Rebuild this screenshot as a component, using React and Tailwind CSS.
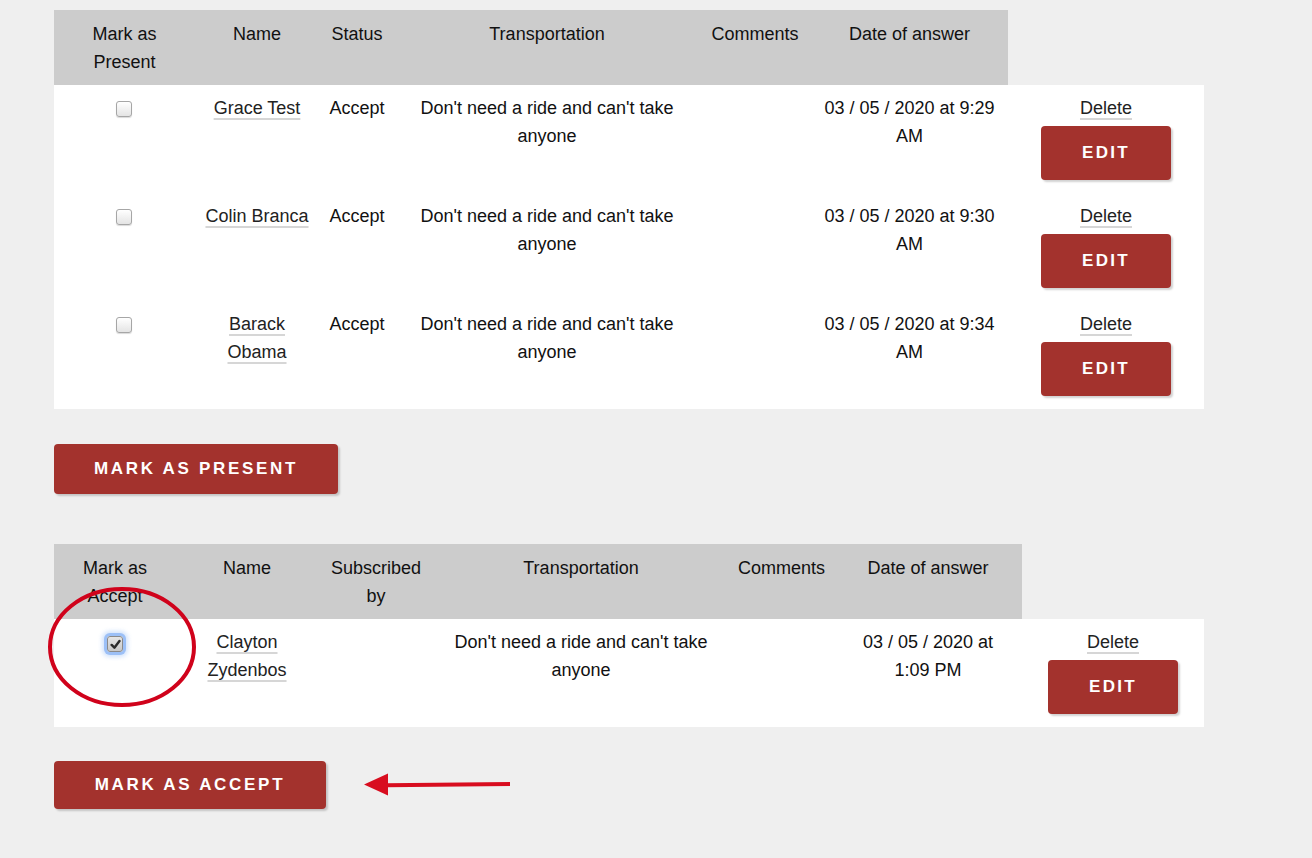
import React from "react";

const presentRows = [
    { name: "Grace Test", status: "Accept", date: "03 / 05 / 2020 at 9:29 AM" },
    { name: "Colin Branca", status: "Accept", date: "03 / 05 / 2020 at 9:30 AM" },
    { name: "Barack Obama", status: "Accept", date: "03 / 05 / 2020 at 9:34 AM" },
];

function Checkbox({ checked, focused }) {
    if (focused) {
        return (
            <span className="inline-flex h-[16px] w-[16px] items-center justify-center rounded-[3px] border border-[#8a8a8a] bg-gradient-to-b from-[#e6e6e6] to-[#c8c8c8] align-middle shadow-[0_0_0_3px_#9cc0f7,0_0_4px_5px_rgba(156,192,247,0.45)]">
                {checked && (
                    <svg width="11" height="11" viewBox="0 0 10 10">
                        <path d="M1.5 5.4 L4 7.9 L8.6 1.8" fill="none" stroke="#2b2b2b" strokeWidth="2.2" strokeLinecap="round" strokeLinejoin="round" />
                    </svg>
                )}
            </span>
        );
    }
    return (
        <span className="inline-flex h-[16px] w-[16px] items-center justify-center rounded-[3px] border border-[#a6a6a6] bg-gradient-to-b from-white to-[#e4e4e4] align-middle shadow-[0_1px_1px_rgba(0,0,0,0.15)]" />
    );
}

function NameLink({ children }) {
    return (
        <a href="#" className="text-[#222] underline decoration-[#d6d6d6] decoration-2 underline-offset-[4px]">
            {children}
        </a>
    );
}

function ActionCell() {
    return (
        <td className="px-[10px] pt-[9px] pb-[13px] align-top text-center">
            <NameLink>Delete</NameLink>
            <div className="mt-[4px] flex justify-center">
                <button className="flex h-[54px] w-[130px] items-center justify-center rounded-[4px] bg-[#a3322d] text-[17px] font-bold tracking-[2.3px] text-white shadow-[2px_2px_2px_rgba(0,0,0,0.18)]">
                    EDIT
                </button>
            </div>
        </td>
    );
}

function BigButton({ children, className }) {
    return (
        <button className={"flex items-center justify-center rounded-[4px] bg-[#a3322d] text-[17px] font-bold tracking-[2.7px] text-white shadow-[2px_2px_2px_rgba(0,0,0,0.18)] " + className}>
            {children}
        </button>
    );
}

const th = "px-[10px] pt-[10px] pb-[9px] align-top text-center font-normal bg-[#cccccc]";
const td = "px-[10px] pt-[9px] align-top text-center";

export default function App() {
    return (
        <div className="relative min-h-[858px] bg-[#efefef] pl-[54px] pt-[10px] text-[18px] leading-[28px] text-[#111]" style={{ fontFamily: '"Liberation Sans", Arial, sans-serif' }}>
            <table className="w-[1150px] table-fixed border-collapse">
                <colgroup>
                    <col className="w-[141px]" />
                    <col className="w-[124px]" />
                    <col className="w-[76px]" />
                    <col className="w-[304px]" />
                    <col className="w-[112px]" />
                    <col className="w-[197px]" />
                    <col className="w-[196px]" />
                </colgroup>
                <thead>
                    <tr>
                        <th className={th}>Mark as Present</th>
                        <th className={th}>Name</th>
                        <th className={th}>Status</th>
                        <th className={th}>Transportation</th>
                        <th className={th}>Comments</th>
                        <th className={th}>Date of answer</th>
                        <th className="bg-transparent" />
                    </tr>
                </thead>
                <tbody className="bg-white">
                    {presentRows.map((r) => (
                        <tr key={r.name}>
                            <td className="pl-[8px] pr-[10px] pt-[9px] align-top text-center">
                                <Checkbox />
                            </td>
                            <td className={td}>
                                <NameLink>{r.name}</NameLink>
                            </td>
                            <td className={td}>{r.status}</td>
                            <td className={td}>Don't need a ride and can't take anyone</td>
                            <td className={td}></td>
                            <td className={td}>{r.date}</td>
                            <ActionCell />
                        </tr>
                    ))}
                </tbody>
            </table>

            <BigButton className="mt-[35px] h-[50px] w-[284px]">MARK AS PRESENT</BigButton>

            <table className="mt-[50px] w-[1150px] table-fixed border-collapse">
                <colgroup>
                    <col className="w-[122px]" />
                    <col className="w-[142px]" />
                    <col className="w-[116px]" />
                    <col className="w-[294px]" />
                    <col className="w-[106px]" />
                    <col className="w-[188px]" />
                    <col className="w-[182px]" />
                </colgroup>
                <thead>
                    <tr>
                        <th className={th}>Mark as Accept</th>
                        <th className={th}>Name</th>
                        <th className={th}>Subscribed by</th>
                        <th className={th}>Transportation</th>
                        <th className={th}>Comments</th>
                        <th className={th}>Date of answer</th>
                        <th className="bg-transparent" />
                    </tr>
                </thead>
                <tbody className="bg-white">
                    <tr>
                        <td className="px-[10px] pt-[10px] align-top text-center">
                            <Checkbox checked focused />
                        </td>
                        <td className={td}>
                            <NameLink>Clayton Zydenbos</NameLink>
                        </td>
                        <td className={td}></td>
                        <td className={td}>Don't need a ride and can't take anyone</td>
                        <td className={td}></td>
                        <td className={td}>03 / 05 / 2020 at 1:09 PM</td>
                        <ActionCell />
                    </tr>
                </tbody>
            </table>

            <BigButton className="mt-[34px] h-[48px] w-[272px]">MARK AS ACCEPT</BigButton>

            {/* annotation overlays */}
            <svg className="pointer-events-none absolute left-[46px] top-[584px]" width="154" height="126" viewBox="0 0 154 126">
                <ellipse cx="76" cy="63" rx="72" ry="58" fill="none" stroke="#d0021b" strokeWidth="4" />
            </svg>
            <svg className="pointer-events-none absolute left-[360px] top-[768px]" width="156" height="32" viewBox="0 0 156 32">
                <path d="M26 17.2 L150 16" stroke="#d80d1f" strokeWidth="4" fill="none" />
                <path d="M4 16.5 L28 5.5 L28 27.5 Z" fill="#d80d1f" />
            </svg>
        </div>
    );
}
